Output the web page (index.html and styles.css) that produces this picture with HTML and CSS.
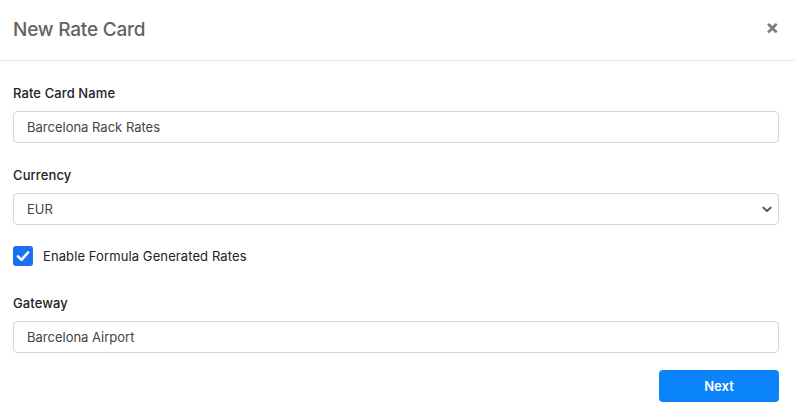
FILE: index.html
```html
<!DOCTYPE html>
<html>
<head>
<meta charset="utf-8">
<link rel="stylesheet" href="styles.css">
</head>
<body>
<div class="modal">
  <div class="modal-header">
    <h1 class="modal-title">New Rate Card</h1>
    <span class="close">&times;</span>
  </div>
  <div class="modal-body">
    <div class="field">
      <label class="label">Rate Card Name</label>
      <div class="input">Barcelona Rack Rates</div>
    </div>
    <div class="field">
      <label class="label">Currency</label>
      <div class="input select">
        <span>EUR</span>
        <svg class="chev" width="10" height="7" viewBox="0 0 10 7"><path d="M1.2 1.5 L5 5 L8.8 1.5" fill="none" stroke="#555" stroke-width="1.8" stroke-linecap="round" stroke-linejoin="round"/></svg>
      </div>
    </div>
    <div class="check-row">
      <span class="checkbox">
        <svg width="20" height="20" viewBox="0 0 20 20"><path d="M5 10.3 L8.5 13.8 L15 6.5" fill="none" stroke="#fff" stroke-width="2.6" stroke-linecap="round" stroke-linejoin="round"/></svg>
      </span>
      <span class="check-label">Enable Formula Generated Rates</span>
    </div>
    <div class="field">
      <label class="label">Gateway</label>
      <div class="input">Barcelona Airport</div>
    </div>
    <div class="actions">
      <button class="btn">Next</button>
    </div>
  </div>
</div>
</body>
</html>
```
FILE: styles.css
```css
html, body {
  margin: 0;
  padding: 0;
  background: #fff;
}
body {
  font-family: Inter, "Liberation Sans", sans-serif;
  color: #212529;
  width: 795px;
  height: 418px;
  overflow: hidden;
}
.modal {
  width: 795px;
}
.modal-header {
  height: 61px;
  box-sizing: border-box;
  border-bottom: 1px solid #e3e3e3;
  display: flex;
  align-items: center;
  justify-content: space-between;
  padding: 0 16px 2px 13px;
}
.modal-title {
  margin: 0;
  font-size: 19px;
  font-weight: 500;
  color: #636363;
  letter-spacing: -0.2px;
}
.close {
  font-size: 20px;
  font-weight: 700;
  color: #7a7a7a;
  line-height: 1;
  margin-top: -4px;
}
.modal-body {
  padding: 24px 16px 0 13px;
}
.field {
  display: flex;
  flex-direction: column;
}
.label {
  font-size: 13px;
  font-weight: 500;
  color: #222;
  line-height: 16px;
  letter-spacing: 0.1px;
  margin-bottom: 10px;
}
.input {
  height: 32px;
  box-sizing: border-box;
  border: 1px solid #d5d5d5;
  border-radius: 4px;
  padding: 0 13px;
  display: flex;
  align-items: center;
  font-size: 13px;
  color: #444;
  margin-bottom: 24px;
}
.select {
  justify-content: space-between;
  padding-right: 6px;
}
.check-row {
  display: flex;
  align-items: center;
  gap: 10px;
  margin-top: -3px;
  margin-bottom: 29px;
}
.checkbox {
  width: 20px;
  height: 20px;
  background: #1b6ff2;
  border-radius: 3px;
  display: flex;
}
.check-label {
  font-size: 13px;
  color: #222;
  letter-spacing: 0.1px;
}
.actions {
  display: flex;
  justify-content: flex-end;
  margin-top: -7px;
}
.btn {
  width: 120px;
  height: 32px;
  border: none;
  border-radius: 4px;
  background: #0b84fb;
  color: #fff;
  font-family: Inter, "Liberation Sans", sans-serif;
  font-size: 13px;
  font-weight: 600;
}
```
